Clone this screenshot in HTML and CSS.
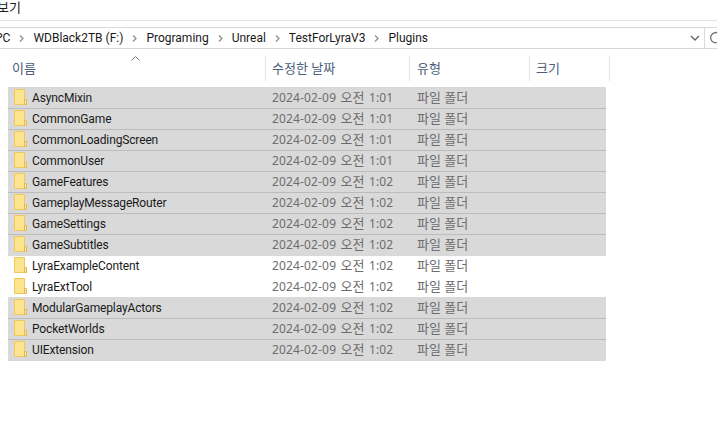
FILE: index.html
```html
<!DOCTYPE html>
<html lang="ko">
<head>
    <meta charset="UTF-8">
    <title>Plugins</title>
    <link rel="stylesheet" href="styles.css">
</head>
<body>
    <div class="menu"><span class="menu-label ko">보기</span></div>
    <div class="address">
        <div class="crumbs">
            <span>PC</span><svg class="sep" viewBox="0 0 5 7"><path d="M1 0.5L4 3.5L1 6.5" /></svg>
            <span>WDBlack2TB (F:)</span><svg class="sep" viewBox="0 0 5 7"><path d="M1 0.5L4 3.5L1 6.5" /></svg>
            <span>Programing</span><svg class="sep" viewBox="0 0 5 7"><path d="M1 0.5L4 3.5L1 6.5" /></svg>
            <span>Unreal</span><svg class="sep" viewBox="0 0 5 7"><path d="M1 0.5L4 3.5L1 6.5" /></svg>
            <span>TestForLyraV3</span><svg class="sep" viewBox="0 0 5 7"><path d="M1 0.5L4 3.5L1 6.5" /></svg>
            <span>Plugins</span>
        </div>
        <svg class="chevron" viewBox="0 0 10 6"><path d="M1 1L5 5L9 1" /></svg>
        <div class="refresh">
            <svg viewBox="0 0 12 14"><path d="M9.5 3.5A5 5 0 1 0 10.5 8" /><path d="M6.5 1H10V4.5" /></svg>
        </div>
    </div>
    <div class="head">
        <svg class="sort" viewBox="0 0 9 5"><path d="M0.5 4.5L4.5 0.5L8.5 4.5" /></svg>
        <div class="head-cell col-name ko">이름</div>
        <div class="head-cell col-date ko">수정한 날짜</div>
        <div class="head-cell col-type ko">유형</div>
        <div class="head-cell col-size ko">크기</div>
    </div>
    <div class="list" id="list"></div>
    <script>
        const folders = [
            ['AsyncMixin', '1:01', true],
            ['CommonGame', '1:01', true],
            ['CommonLoadingScreen', '1:01', true],
            ['CommonUser', '1:01', true],
            ['GameFeatures', '1:02', true],
            ['GameplayMessageRouter', '1:02', true],
            ['GameSettings', '1:02', true],
            ['GameSubtitles', '1:02', true],
            ['LyraExampleContent', '1:02', false],
            ['LyraExtTool', '1:02', false],
            ['ModularGameplayActors', '1:02', true],
            ['PocketWorlds', '1:02', true],
            ['UIExtension', '1:02', true]
        ];
        const icon = '<svg class="folder" viewBox="0 0 13 16">' +
            '<path d="M0.5 0.5H10.5V15.5H0.5Z" fill="#fde48f" stroke="#f0c75e"/>' +
            '<path d="M10.5 10.5H12.5V15.5H10.5Z" fill="#fdeaa8" stroke="#e3b84f"/>' +
            '</svg>';
        document.getElementById('list').innerHTML = folders.map(([name, time, selected]) => `
            <div class="row${selected ? ' selected' : ''}">
                <div class="cell-name">${icon}<span>${name}</span></div>
                <div class="cell-date">2024-02-09 <span class="ko">오전</span> ${time}</div>
                <div class="cell-type ko">파일 폴더</div>
            </div>`).join('');
    </script>
</body>
</html>
```

FILE: styles.css
```css
html, body {
    margin: 0;
    height: 100%;
}
body {
    background-color: #fff;
    font-family: 'Noto Sans', 'Noto Sans CJK KR', sans-serif;
    font-size: 12px;
    color: #1a1a1a;
    overflow: hidden;
}
svg {
    display: block;
    fill: none;
}
.ko {
    font-size: 13px;
}
.menu {
    height: 20px;
    border-bottom: 1px solid #e3e3e3;
    overflow: hidden;
}
.menu-label {
    display: block;
    margin-left: -3px;
    line-height: 15px;
}
.address {
    display: flex;
    align-items: center;
    height: 20px;
    margin-top: 6px;
    border-top: 1px solid #d9d9d9;
    border-bottom: 1px solid #d9d9d9;
}
.crumbs {
    display: flex;
    align-items: center;
    flex: 1;
    margin-left: -5px;
    gap: 9px;
    font-family: Roboto, sans-serif;
    white-space: nowrap;
    overflow: hidden;
}
.sep {
    width: 5px;
    height: 7px;
    stroke: #909090;
    stroke-width: 1.3;
}
.chevron {
    width: 10px;
    height: 6px;
    margin-right: 4px;
    stroke: #666;
    stroke-width: 1.4;
}
.refresh {
    box-sizing: border-box;
    width: 13px;
    height: 20px;
    display: flex;
    align-items: center;
    padding-left: 5px;
    border-left: 1px solid #d9d9d9;
}
.refresh svg {
    width: 12px;
    height: 14px;
    flex: none;
    stroke: #666;
    stroke-width: 1.2;
}
.head {
    position: relative;
    display: flex;
    height: 25px;
    margin-top: 7px;
    color: #4c607a;
}
.head-cell {
    box-sizing: border-box;
    line-height: 24px;
    border-right: 1px solid #e5e5e5;
}
.col-name {
    width: 266px;
    padding-left: 12px;
}
.col-date {
    width: 144px;
    padding-left: 6px;
}
.col-type {
    width: 120px;
    padding-left: 7px;
}
.col-size {
    width: 80px;
    padding-left: 6px;
}
.sort {
    position: absolute;
    left: 131px;
    top: 0;
    width: 9px;
    height: 5px;
    stroke: #777;
}
.list {
    margin: 7px 0 0 8px;
    width: 598px;
}
.row {
    box-sizing: border-box;
    display: flex;
    align-items: center;
    height: 21px;
    line-height: 16px;
    color: #6d6d6d;
    border-bottom: 1px solid transparent;
}
.selected {
    background-color: #d9d9d9;
}
.selected:has(+ .selected) {
    border-bottom-color: #bcbcbc;
}
.selected:first-child,
.row:not(.selected) + .selected {
    box-shadow: 0 -1px 0 #d9d9d9;
}
.cell-name {
    display: flex;
    align-items: center;
    width: 264px;
    padding-left: 6px;
    box-sizing: border-box;
    font-family: Roboto, sans-serif;
    letter-spacing: -0.14px;
    color: #1a1a1a;
}
.folder {
    width: 13px;
    height: 16px;
    margin: 0 5px 2px 0;
}
.cell-date {
    width: 145px;
    margin-bottom: 2px;
    letter-spacing: 0.15px;
    word-spacing: 1px;
}
.cell-type {
    margin-bottom: 2px;
}
```
